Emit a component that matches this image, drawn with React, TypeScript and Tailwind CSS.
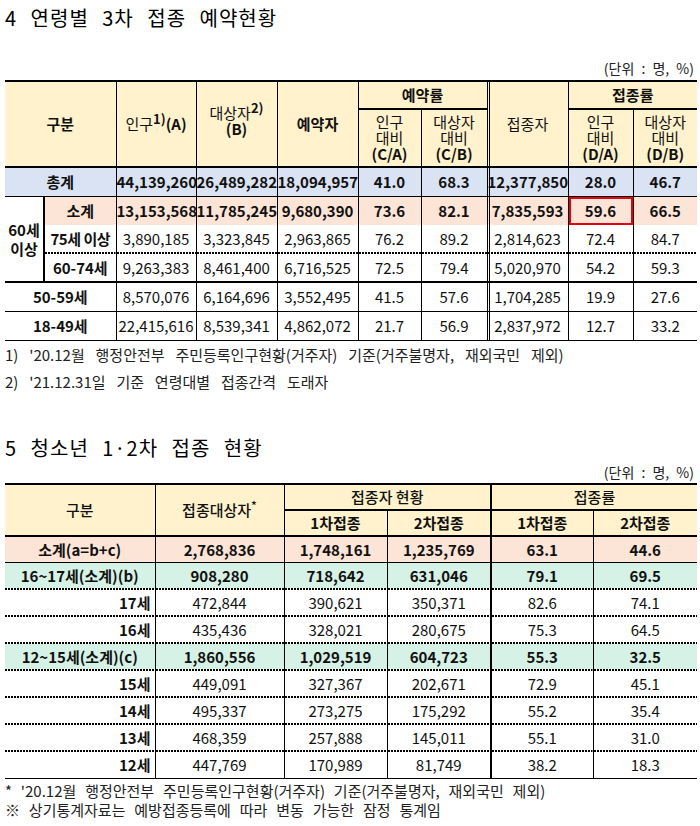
import React from 'react';

// Vaccination reservation / adolescent vaccination status tables

const FONT = "font-['Noto_Sans_CJK_KR','Noto_Sans',sans-serif]";

const Y = 'bg-[#fff2cc]';
const BLUE = 'bg-[#dae3f3]';
const PEACH = 'bg-[#fce4d6]';
const MINT = 'bg-[#d6f1e5]';

const td = 'p-0 text-center align-middle border-black';

// double vertical rule: 1px border, 1px gap in the row colour, 1px line
const DBL_W = 'border-l shadow-[inset_1px_0_0_0_#ffffff,inset_2px_0_0_0_#000000]';
const DBL_Y = 'border-l shadow-[inset_1px_0_0_0_#fff2cc,inset_2px_0_0_0_#000000]';
const DBL_B = 'border-l shadow-[inset_1px_0_0_0_#dae3f3,inset_2px_0_0_0_#000000]';
const DBL_P = 'border-l shadow-[inset_1px_0_0_0_#fce4d6,inset_2px_0_0_0_#000000]';

// dotted separator row between table rows
const Sep = ({ cols }: { cols: string[] }) => (
  <tr className="h-[2px]">
    {cols.map((c, i) => (
      <td key={i} className={`p-0 h-[2px] leading-[0px] border-black ${c}`}>
        <svg className="block w-full h-[2px]" preserveAspectRatio="none">
          <line x1="0" y1="1" x2="100%" y2="1" stroke="#000" strokeWidth="2" strokeDasharray="2 1" />
        </svg>
      </td>
    ))}
  </tr>
);

type Row1 = {
  label: string;
  a: string;
  b: string;
  c: string;
  ca: string;
  cb: string;
  d: string;
  da: string;
  db: string;
};

const AgeTable = () => {
  const sub: Row1[] = [
    { label: '75세 이상', a: '3,890,185', b: '3,323,845', c: '2,963,865', ca: '76.2', cb: '89.2', d: '2,814,623', da: '72.4', db: '84.7' },
    { label: '60-74세', a: '9,263,383', b: '8,461,400', c: '6,716,525', ca: '72.5', cb: '79.4', d: '5,020,970', da: '54.2', db: '59.3' },
  ];
  const young: Row1[] = [
    { label: '50-59세', a: '8,570,076', b: '6,164,696', c: '3,552,495', ca: '41.5', cb: '57.6', d: '1,704,285', da: '19.9', db: '27.6' },
    { label: '18-49세', a: '22,415,616', b: '8,539,341', c: '4,862,072', ca: '21.7', cb: '56.9', d: '2,837,972', da: '12.7', db: '33.2' },
  ];

  const cells = (r: Row1, bold: boolean, dbl = DBL_W) => {
    const w = bold ? 'font-bold' : 'font-normal';
    return (
      <>
        <td className={`${td} border-l ${w}`}>{r.a}</td>
        <td className={`${td} border-l ${w}`}>{r.b}</td>
        <td className={`${td} border-l ${w}`}>{r.c}</td>
        <td className={`${td} border-l ${w}`}>{r.ca}</td>
        <td className={`${td} border-l ${w}`}>{r.cb}</td>
        <td className={`${td} ${dbl} ${w}`}>{r.d}</td>
        <td className={`${td} border-l ${w}`}>{r.da}</td>
        <td className={`${td} border-l ${w}`}>{r.db}</td>
      </>
    );
  };

  return (
    <table className="w-full table-fixed border-collapse border-t-2 border-black text-[15px] leading-none text-[#111]">
      <colgroup>
        <col className="w-[39px]" />
        <col className="w-[72px]" />
        <col className="w-[80px]" />
        <col className="w-[81px]" />
        <col className="w-[81px]" />
        <col className="w-[63px]" />
        <col className="w-[66px]" />
        <col className="w-[81px]" />
        <col className="w-[65px]" />
        <col className="w-[64px]" />
      </colgroup>
      <thead className="text-[15px] leading-[16px]">
        <tr className={Y}>
          <td colSpan={2} rowSpan={2} className={`${td} font-bold`}>구분</td>
          <td rowSpan={2} className={`${td} border-l`}>
            인구<sup className="font-bold text-[13px]">1)</sup><span className="font-bold">(A)</span>
          </td>
          <td rowSpan={2} className={`${td} border-l`}>
            <div className="-mt-[6px]">
              대상자<sup className="font-bold text-[13px]">2)</sup>
            </div>
            <div className="font-bold">(B)</div>
          </td>
          <td rowSpan={2} className={`${td} border-l font-bold`}>예약자</td>
          <td colSpan={2} className={`${td} border-l border-b-2 h-[28px] font-bold`}>예약률</td>
          <td rowSpan={2} className={`${td} ${DBL_Y}`}>접종자</td>
          <td colSpan={2} className={`${td} border-l border-b-2 font-bold`}>접종률</td>
        </tr>
        <tr className={`${Y} h-[58px] border-b-2 border-black`}>
          <td className={`${td} border-l`}>
            인구<br />대비<br /><span className="font-bold">(C/A)</span>
          </td>
          <td className={`${td} border-l`}>
            대상자<br />대비<br /><span className="font-bold">(C/B)</span>
          </td>
          <td className={`${td} border-l`}>
            인구<br />대비<br /><span className="font-bold">(D/A)</span>
          </td>
          <td className={`${td} border-l`}>
            대상자<br />대비<br /><span className="font-bold">(D/B)</span>
          </td>
        </tr>
      </thead>
      <tbody>
        <tr className={`${BLUE} h-[29px] border-b border-black`}>
          <td colSpan={2} className={`${td} font-bold`}>총계</td>
          {cells({ label: '', a: '44,139,260', b: '26,489,282', c: '18,094,957', ca: '41.0', cb: '68.3', d: '12,377,850', da: '28.0', db: '46.7' }, true, DBL_B)}
        </tr>
        <tr className="h-[29px]">
          <td rowSpan={4} className={`${td} border-r-2 border-b-2 font-bold leading-[19px]`}>
            60세<br />이상
          </td>
          <td className={`${td} ${PEACH} font-bold`}>소계</td>
          <td className={`${td} ${PEACH} border-l font-bold`}>13,153,568</td>
          <td className={`${td} ${PEACH} border-l font-bold`}>11,785,245</td>
          <td className={`${td} ${PEACH} border-l font-bold`}>9,680,390</td>
          <td className={`${td} ${PEACH} border-l font-bold`}>73.6</td>
          <td className={`${td} ${PEACH} border-l font-bold`}>82.1</td>
          <td className={`${td} ${PEACH} ${DBL_P} font-bold`}>7,835,593</td>
          <td className={`${td} ${PEACH} border-l font-bold shadow-[inset_0_0_0_2px_#e3000f]`}>59.6</td>
          <td className={`${td} ${PEACH} border-l font-bold`}>66.5</td>
        </tr>
        <tr className="h-[27px]">
          <td className={`${td} font-bold whitespace-nowrap tracking-[-0.5px]`}>{sub[0].label}</td>
          {cells(sub[0], false)}
        </tr>
        <Sep cols={['', 'border-l', 'border-l', 'border-l', 'border-l', 'border-l', DBL_W, 'border-l', 'border-l']} />
        <tr className="h-[28px] border-b-2 border-black">
          <td className={`${td} font-bold`}>{sub[1].label}</td>
          {cells(sub[1], false)}
        </tr>
        {young.map((r) => (
          <tr key={r.label} className="h-[29px] border-b border-black">
            <td colSpan={2} className={`${td} font-bold`}>{r.label}</td>
            {cells(r, false)}
          </tr>
        ))}
      </tbody>
    </table>
  );
};

type Row2 = {
  label: string;
  n: string;
  v1: string;
  v2: string;
  r1: string;
  r2: string;
  kind: 'total' | 'group' | 'age';
};

const teenRows: Row2[] = [
  { label: '소계(a=b+c)', n: '2,768,836', v1: '1,748,161', v2: '1,235,769', r1: '63.1', r2: '44.6', kind: 'total' },
  { label: '16~17세(소계)(b)', n: '908,280', v1: '718,642', v2: '631,046', r1: '79.1', r2: '69.5', kind: 'group' },
  { label: '17세', n: '472,844', v1: '390,621', v2: '350,371', r1: '82.6', r2: '74.1', kind: 'age' },
  { label: '16세', n: '435,436', v1: '328,021', v2: '280,675', r1: '75.3', r2: '64.5', kind: 'age' },
  { label: '12~15세(소계)(c)', n: '1,860,556', v1: '1,029,519', v2: '604,723', r1: '55.3', r2: '32.5', kind: 'group' },
  { label: '15세', n: '449,091', v1: '327,367', v2: '202,671', r1: '72.9', r2: '45.1', kind: 'age' },
  { label: '14세', n: '495,337', v1: '273,275', v2: '175,292', r1: '55.2', r2: '35.4', kind: 'age' },
  { label: '13세', n: '468,359', v1: '257,888', v2: '145,011', r1: '55.1', r2: '31.0', kind: 'age' },
  { label: '12세', n: '447,769', v1: '170,989', v2: '81,749', r1: '38.2', r2: '18.3', kind: 'age' },
];

const teenSepCols = ['', 'border-l', 'border-l', 'border-l', 'border-l-2', 'border-l'];

const TeenTable = () => (
  <table className="w-full table-fixed border-collapse border-t-2 border-black text-[15px] leading-none text-[#111]">
    <colgroup>
      <col className="w-[150px]" />
      <col className="w-[129px]" />
      <col className="w-[103px]" />
      <col className="w-[104px]" />
      <col className="w-[102px]" />
      <col className="w-[104px]" />
    </colgroup>
    <thead className="text-[15px]">
      <tr className={`${Y} h-[26px]`}>
        <td rowSpan={2} className={`${td} font-medium`}>구분</td>
        <td rowSpan={2} className={`${td} border-l font-medium`}>
          접종대상자<sup className="text-[12px]">*</sup>
        </td>
        <td colSpan={2} className={`${td} border-l border-b-2 font-medium`}>접종자 현황</td>
        <td colSpan={2} className={`${td} border-l-2 border-b-2 font-medium`}>접종률</td>
      </tr>
      <tr className={`${Y} h-[26px] border-b-2 border-black`}>
        <td className={`${td} border-l font-bold`}>1차접종</td>
        <td className={`${td} border-l font-bold`}>2차접종</td>
        <td className={`${td} border-l-2 font-bold`}>1차접종</td>
        <td className={`${td} border-l font-bold`}>2차접종</td>
      </tr>
    </thead>
    <tbody>
      {teenRows.map((r, i) => {
        const bg = r.kind === 'total' ? PEACH : r.kind === 'group' ? MINT : '';
        const w = r.kind === 'age' ? 'font-normal' : 'font-bold';
        const last = i === teenRows.length - 1;
        const solid = r.kind === 'total' || last;
        return (
          <React.Fragment key={r.label}>
            <tr className={`${bg} ${solid ? 'h-[27px] border-b border-black' : 'h-[25px]'}`}>
              <td className={`${td} font-bold ${r.kind === 'age' ? 'text-right pr-[4px]' : ''}`}>
                {r.label}
              </td>
              <td className={`${td} border-l ${w}`}>{r.n}</td>
              <td className={`${td} border-l ${w}`}>{r.v1}</td>
              <td className={`${td} border-l ${w}`}>{r.v2}</td>
              <td className={`${td} border-l-2 ${w}`}>{r.r1}</td>
              <td className={`${td} border-l ${w}`}>{r.r2}</td>
            </tr>
            {!solid && <Sep cols={teenSepCols} />}
          </React.Fragment>
        );
      })}
    </tbody>
  </table>
);

export default function App() {
  return (
    <div className={`${FONT} w-[700px] min-h-[826px] bg-white px-[5px] text-black`}>
      <h1 className="h-[36px] flex items-center text-[20px] font-normal tracking-[1px] [word-spacing:8px]">
        4 연령별 3차 접종 예약현황
      </h1>
      <div className="mt-[20px] h-[24px] flex items-center justify-end pr-[1px] text-[14px] text-[#222] [word-spacing:4px]">
        (단위 : 명, %)
      </div>
      <AgeTable />
      <div className="text-[15px] leading-[27px] text-[#222] [word-spacing:7.5px]">
        <p>1) '20.12월 행정안전부 주민등록인구현황(거주자) 기준(거주불명자, 재외국민 제외)</p>
        <p>2) '21.12.31일 기준 연령대별 접종간격 도래자</p>
      </div>
      <h1 className="mt-[36px] h-[35px] flex items-center text-[20px] font-normal tracking-[1px] [word-spacing:8px]">
        5 청소년 1·2차 접종 현황
      </h1>
      <div className="-mt-[3px] h-[20px] flex items-center justify-end pr-[1px] text-[14px] text-[#222] [word-spacing:4px]">
        (단위 : 명, %)
      </div>
      <TeenTable />
      <div className="pt-[2px] text-[15px] leading-[19px] text-[#222] [word-spacing:5.5px]">
        <p>* '20.12월 행정안전부 주민등록인구현황(거주자) 기준(거주불명자, 재외국민 제외)</p>
        <p>※ 상기통계자료는 예방접종등록에 따라 변동 가능한 잠정 통계임</p>
      </div>
    </div>
  );
}
